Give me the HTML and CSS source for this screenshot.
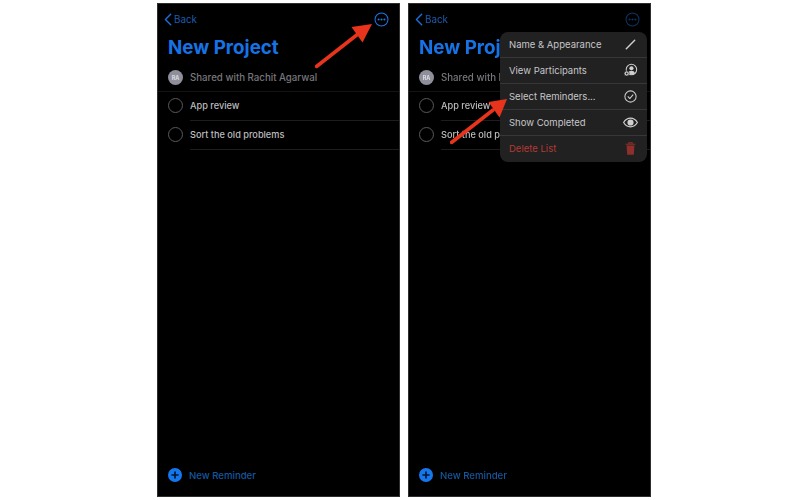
FILE: index.html
```html
<!DOCTYPE html>
<html lang="en">
<head>
<meta charset="utf-8">
<title>New Project</title>
<link rel="stylesheet" href="styles.css">
</head>
<body>
<main class="stage">
  <section class="phone">
    <header class="nav">
      <a class="back"><svg class="chev" viewBox="0 0 9 14"><path d="M7.5 1.2 1.6 7l5.9 5.8" /></svg>Back</a>
      <svg class="more" viewBox="0 0 16 16"><circle cx="8" cy="8" r="6.9"/><circle class="dot" cx="4.900" cy="8" r="1.100"/><circle class="dot" cx="8" cy="8" r="1.100"/><circle class="dot" cx="11.100" cy="8" r="1.100"/></svg>
    </header>
    <h1 class="title">New Project</h1>
    <div class="shared"><span class="avatar">RA</span><span>Shared with Rachit Agarwal</span></div>
    <div class="item"><span class="radio"></span><span class="label">App review</span></div>
    <div class="item"><span class="radio"></span><span class="label">Sort the old problems</span></div>
    <footer class="add">
      <svg class="plus" viewBox="0 0 14 14"><circle cx="7" cy="7" r="7"/><path d="M7 3.4v7.2M3.4 7h7.2"/></svg>
      <span>New Reminder</span>
    </footer>
    <svg class="arrow arrow-one" viewBox="0 0 58 58"><path class="shaft" d="M1.500 52.500 43 20"/><path class="head" d="M57 10 36.500 13l11 15.500z"/></svg>
  </section>

  <section class="phone">
    <header class="nav">
      <a class="back"><svg class="chev" viewBox="0 0 9 14"><path d="M7.5 1.2 1.6 7l5.9 5.8" /></svg>Back</a>
      <svg class="more dim" viewBox="0 0 16 16"><circle cx="8" cy="8" r="6.9"/><circle class="dot" cx="4.900" cy="8" r="1.100"/><circle class="dot" cx="8" cy="8" r="1.100"/><circle class="dot" cx="11.100" cy="8" r="1.100"/></svg>
    </header>
    <h1 class="title">New Project</h1>
    <div class="shared"><span class="avatar">RA</span><span>Shared with Rachit Agarwal</span></div>
    <div class="item"><span class="radio"></span><span class="label">App review</span></div>
    <div class="item"><span class="radio"></span><span class="label">Sort the old problems</span></div>
    <footer class="add">
      <svg class="plus" viewBox="0 0 14 14"><circle cx="7" cy="7" r="7"/><path d="M7 3.4v7.2M3.4 7h7.2"/></svg>
      <span>New Reminder</span>
    </footer>

    <ul class="menu">
      <li class="row"><span>Name &amp; Appearance</span>
        <svg class="ico" viewBox="0 0 16 16"><path class="line" d="M3.5 12.5 12.5 3.5"/></svg></li>
      <li class="row"><span>View Participants</span>
        <svg class="ico" viewBox="0 0 16 16"><circle class="line thin" cx="9" cy="7" r="5.6"/><circle class="fill" cx="9" cy="5.6" r="2.2"/><path class="fill" d="M5.2 11c.6-2 2-2.8 3.8-2.8s3.2.8 3.8 2.8c-1 .9-2.3 1.300-3.800 1.300S6.200 11.900 5.200 11z"/><circle class="fill ring" cx="3.900" cy="11.200" r="2.700"/><circle class="knock" cx="3.900" cy="11.200" r="1"/></svg></li>
      <li class="row"><span>Select Reminders...</span>
        <svg class="ico" viewBox="0 0 16 16"><circle class="line thin" cx="8" cy="8" r="6"/><path class="line thin" d="M5.400 8.200 7.200 10.200l3.400-4"/></svg></li>
      <li class="row"><span>Show Completed</span>
        <svg class="ico wide" viewBox="0 0 16 16"><path class="line thin" d="M1.500 8C3.200 5.200 5.400 3.900 8 3.900s4.800 1.300 6.500 4.100c-1.700 2.800-3.900 4.100-6.500 4.100S3.200 10.800 1.500 8z"/><circle class="fill" cx="8" cy="8" r="2.900"/></svg></li>
      <li class="row danger"><span>Delete List</span>
        <svg class="ico" viewBox="0 0 16 16"><path class="trash" d="M3.800 4.800h8.400l-.7 9.800H4.500z"/><path class="trash-line" d="M2.800 3.400h10.400M6.200 3.200V1.800h3.600v1.400"/></svg></li>
    </ul>
    <svg class="arrow arrow-two" viewBox="0 0 58 58"><path class="shaft" d="M1.500 53.500 43 21"/><path class="head" d="M57 10 38.500 13l11 15.500z"/></svg>
  </section>
</main>
</body>
</html>
```

FILE: styles.css
```css
* { box-sizing: border-box; }
html, body { margin: 0; padding: 0; background: #fff; }
body { font-family: "Inter", "Liberation Sans", sans-serif; }

.stage {
  display: flex;
  gap: 8px;
  width: 799px;
  height: 500px;
  padding: 3px 0 3px 157px;
  filter: blur(0.35px);
}

.phone {
  position: relative;
  display: flex;
  flex-direction: column;
  width: 243px;
  height: 494px;
  background: #000;
  border: 1.500px solid #2e2e2f;
  overflow: hidden;
}

.nav {
  display: flex;
  align-items: center;
  justify-content: space-between;
  height: 14px;
  margin-top: 8px;
  padding: 0 10px 0 6px;
}
.back {
  display: flex;
  align-items: center;
  gap: 2px;
  font-size: 9.800px;
  color: #1a5cb0;
}
.chev { width: 8px; height: 13px; }
.chev path { fill: none; stroke: #1c6fd6; stroke-width: 1.600; stroke-linecap: round; stroke-linejoin: round; }
.more { width: 15px; height: 15px; }
.more circle { fill: none; stroke: #1f74e0; stroke-width: 1.100; }
.more .dot { fill: #1f74e0; stroke: none; }
.more.dim { opacity: 0.45; }

.title {
  margin: 10px 0 0 10px;
  font-size: 18.800px;
  line-height: 24px;
  font-weight: 700;
  color: #1673e6;
}

.shared {
  display: flex;
  align-items: center;
  gap: 7px;
  height: 28px;
  margin-top: 4px;
  padding-left: 10px;
  font-size: 9.700px;
  font-weight: 500;
  color: #77777b;
  border-bottom: 1px solid #141414;
}
.avatar {
  display: flex;
  align-items: center;
  justify-content: center;
  flex: none;
  width: 15px;
  height: 15px;
  border-radius: 50%;
  background: #8f8f9b;
  color: #e4e4e8;
  font-size: 5.500px;
  font-weight: 600;
}

.item {
  display: flex;
  align-items: center;
  gap: 7px;
  height: 29px;
  padding-left: 10px;
  font-size: 9.200px;
  font-weight: 500;
  color: #bdbdbf;
}
.radio {
  flex: none;
  width: 15px;
  height: 15px;
  margin-bottom: 2px;
  border: 1px solid #5a5a5c;
  border-radius: 50%;
}
.label {
  flex: 1;
  align-self: stretch;
  display: flex;
  align-items: center;
  padding-bottom: 2px;
  border-bottom: 1px solid #1d1d1d;
}

.add {
  display: flex;
  align-items: center;
  gap: 7px;
  margin-top: auto;
  margin-bottom: 14px;
  padding-left: 10px;
  font-size: 9.600px;
  font-weight: 500;
  color: #15579f;
}
.plus { width: 14px; height: 14px; flex: none; }
.plus circle { fill: #1577ee; }
.plus path { fill: none; stroke: #03172e; stroke-width: 1.700; }

.menu {
  position: absolute;
  top: 27.500px;
  left: 91px;
  width: 147px;
  margin: 0;
  padding: 0;
  list-style: none;
  background: #212122;
  border-radius: 8px;
  font-size: 9.500px;
  color: #c6c6c8;
}
.row {
  display: flex;
  align-items: center;
  justify-content: space-between;
  height: 26px;
  padding: 0 9px;
  border-bottom: 1px solid #37373a;
}
.row:last-child { border-bottom: 0; }
.danger { color: #b23a34; }

.ico { width: 15px; height: 15px; flex: none; }
.ico.wide { width: 17px; height: 17px; margin-right: -1px; }
.line { fill: none; stroke: #d0d0d2; stroke-width: 1.500; stroke-linecap: round; stroke-linejoin: round; }
.line.thin { stroke-width: 1.100; }
.fill { fill: #d0d0d2; }
.ring { stroke: #212122; stroke-width: 0.700; }
.knock { fill: #212122; }
.trash { fill: #8f2f2c; }
.trash-line { fill: none; stroke: #8f2f2c; stroke-width: 1.100; }

.arrow { position: absolute; pointer-events: none; }
.arrow-one { left: 157px; top: 10px; width: 58px; height: 58px; }
.arrow-two { left: 41px; top: 85px; width: 58px; height: 58px; }
.shaft { fill: none; stroke: #e8341c; stroke-width: 3.500; stroke-linecap: round; }
.head { fill: #e8341c; }
```
